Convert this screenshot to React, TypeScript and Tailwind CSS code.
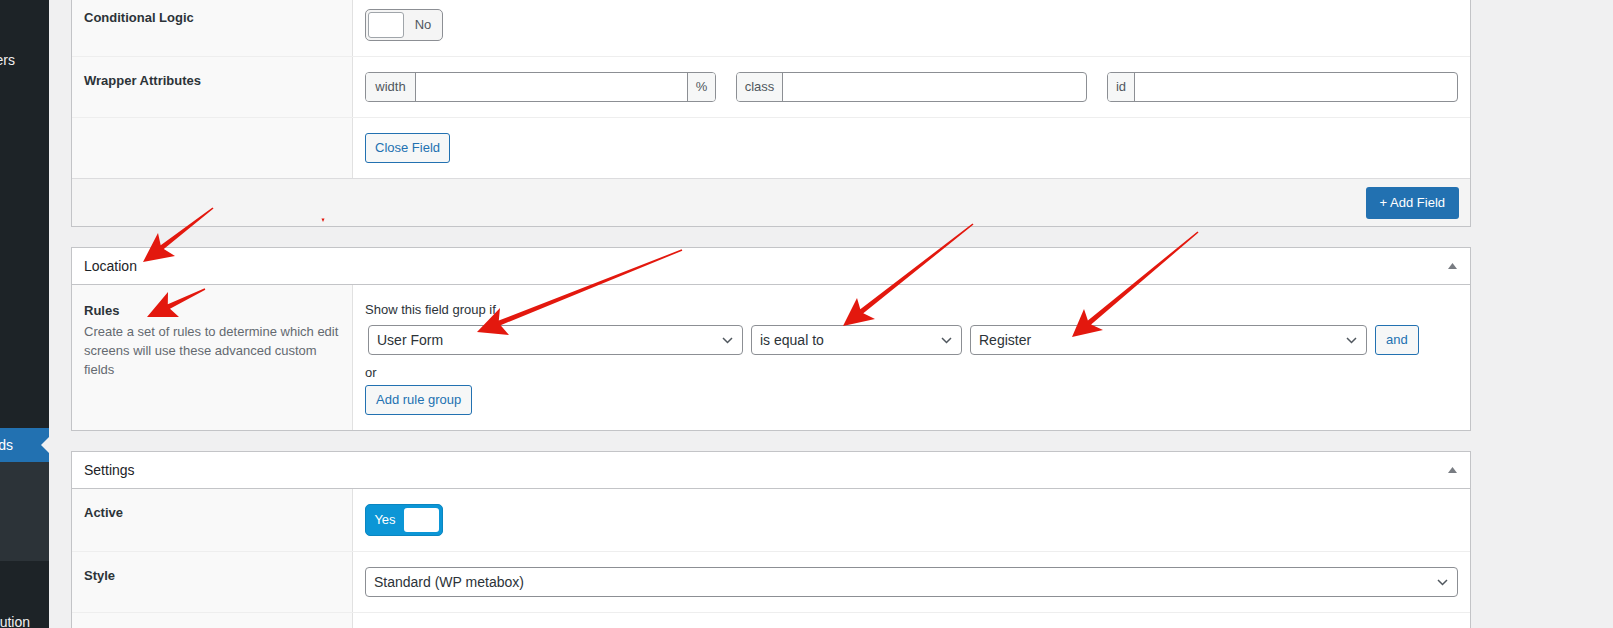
import React from "react";

type Pt = [number, number];

// red annotation arrow: thin tail, widening shaft, notched head
function arrowPoints(t: Pt, tip: Pt, b1: Pt, b2: Pt, wt = 1.5, wb = 5) {
  const dx = tip[0] - t[0];
  const dy = tip[1] - t[1];
  const len = Math.hypot(dx, dy);
  const ux = dx / len;
  const uy = dy / len;
  const nx = -uy;
  const ny = ux;
  const mid: Pt = [(b1[0] + b2[0]) / 2, (b1[1] + b2[1]) / 2];
  const proj = (mid[0] - t[0]) * ux + (mid[1] - t[1]) * uy + 5;
  const m: Pt = [t[0] + ux * proj, t[1] + uy * proj];
  const side = (b: Pt) => (b[0] - m[0]) * nx + (b[1] - m[1]) * ny;
  const [bp, bn] = side(b1) > 0 ? [b1, b2] : [b2, b1];
  const pts: Pt[] = [
    [t[0] + (nx * wt) / 2, t[1] + (ny * wt) / 2],
    [m[0] + (nx * wb) / 2, m[1] + (ny * wb) / 2],
    bp,
    tip,
    bn,
    [m[0] - (nx * wb) / 2, m[1] - (ny * wb) / 2],
    [t[0] - (nx * wt) / 2, t[1] - (ny * wt) / 2],
  ];
  return pts.map((p) => `${p[0].toFixed(1)},${p[1].toFixed(1)}`).join(" ");
}

const arrows: [Pt, Pt, Pt, Pt][] = [
  [[213, 208], [143, 262], [158, 233], [175, 256]],
  [[205, 289], [147, 317], [168, 292], [179, 317]],
  [[682, 250], [477, 332], [500, 308], [509, 335]],
  [[973, 224], [843, 326], [857, 298], [875, 319]],
  [[1198, 232], [1072, 337], [1084, 309], [1103, 330]],
];

function Chevron() {
  return (
    <svg width="11" height="7" viewBox="0 0 11 7" className="shrink-0">
      <path d="M1 1l4.5 4.5L10 1" fill="none" stroke="#50575e" strokeWidth="1.5" />
    </svg>
  );
}

function Select({ value, className }: { value: string; className: string }) {
  return (
    <div
      className={`flex h-[30px] items-center justify-between rounded-[4px] border border-[#8c8f94] bg-white pl-[8px] pr-[9px] text-[14px] text-[#2c3338] ${className}`}
    >
      <span>{value}</span>
      <Chevron />
    </div>
  );
}

function Button({ children }: { children: React.ReactNode }) {
  return (
    <button className="flex h-[30px] items-center rounded-[3px] border border-[#2271b1] bg-[#f6f7f7] px-[10px] text-[13px] text-[#2271b1]">
      {children}
    </button>
  );
}

function InputGroup({ pre, preW, post }: { pre: string; preW: string; post?: string }) {
  return (
    <div className="flex h-[30px] overflow-hidden rounded-[4px] border border-[#8c8f94] bg-white text-[13px] text-[#50575e]">
      <div className={`flex items-center justify-center border-r border-[#8c8f94] bg-[#f6f7f7] ${preW}`}>{pre}</div>
      <div className="flex-1" />
      {post && (
        <div className="flex w-[28px] items-center justify-center border-l border-[#8c8f94] bg-[#f6f7f7]">{post}</div>
      )}
    </div>
  );
}

function Row({ label, children, first }: { label?: React.ReactNode; children: React.ReactNode; first?: boolean }) {
  return (
    <div className={`flex ${first ? "" : "border-t border-[#eeeeee]"}`}>
      <div className="w-[281px] shrink-0 border-r border-[#e1e1e1] bg-[#f9f9f9] px-3 py-[15px] text-[13px] font-bold leading-[18px] text-[#2c3338]">
        {label}
      </div>
      <div className="flex-1 px-3 py-[15px]">{children}</div>
    </div>
  );
}

function PanelHeader({ title }: { title: string }) {
  return (
    <div className="flex h-[37px] items-center justify-between border-b border-[#c3c4c7] pl-3 pr-[13px] text-[14px] text-[#1d2327]">
      <span>{title}</span>
      <svg width="9" height="6" viewBox="0 0 9 6">
        <polygon points="4.5,0 9,6 0,6" fill="#787c82" />
      </svg>
    </div>
  );
}

function Sidebar() {
  return (
    <div className="flex h-full w-[49px] shrink-0 flex-col overflow-hidden bg-[#1d2327] text-[14px] text-[#f0f0f1]">
      <div className="h-[43px] shrink-0" />
      <div className="flex h-[34px] shrink-0 items-center">
        <div className="flex w-[15px] justify-end">
          <span className="shrink-0 whitespace-nowrap">Users</span>
        </div>
      </div>
      <div className="h-[351px] shrink-0" />
      <div className="relative flex h-[34px] shrink-0 items-center bg-[#2271b1] text-white">
        <div className="flex w-[13px] justify-end">
          <span className="shrink-0 whitespace-nowrap">ACF Fields</span>
        </div>
        <span className="absolute right-0 top-[9px] border-y-[8px] border-r-[8px] border-y-transparent border-r-[#f0f0f1]" />
      </div>
      <div className="h-[99px] shrink-0 bg-[#2c3338]" />
      <div className="h-[44px] shrink-0" />
      <div className="flex h-[34px] shrink-0 items-center">
        <div className="flex w-[30px] justify-end">
          <span className="shrink-0 whitespace-nowrap">Distribution</span>
        </div>
      </div>
    </div>
  );
}

export default function App() {
  return (
    <div className="relative flex h-[628px] w-[1613px] overflow-hidden bg-[#f0f0f1] font-['Liberation_Sans',Arial,sans-serif]">
      <Sidebar />

      <div className="w-[1422px] shrink-0 pl-[22px]">
        {/* Field settings (scrolled) */}
        <div className="-mt-[7px] border border-[#c3c4c7] bg-white">
          <Row label="Conditional Logic" first>
            <div className="flex h-[32px] w-[78px] items-center rounded-[5px] border border-[#8c8f94] bg-[#f5f5f5] pl-[2px]">
              <div className="h-[26px] w-[36px] rounded-[3px] border border-[#a0a5aa] bg-white" />
              <span className="flex-1 text-center text-[13px] text-[#50575e]">No</span>
            </div>
          </Row>
          <Row label="Wrapper Attributes">
            <div className="grid grid-cols-3 gap-x-5">
              <InputGroup pre="width" preW="w-[50px]" post="%" />
              <InputGroup pre="class" preW="w-[46px]" />
              <InputGroup pre="id" preW="w-[27px]" />
            </div>
          </Row>
          <Row>
            <button className="flex h-[30px] items-center rounded-[3px] border border-[#2271b1] bg-[#f6f7f7] px-[9px] text-[13px] text-[#2271b1]">
              Close Field
            </button>
          </Row>
          <div className="flex justify-end border-t border-[#dcdcde] bg-[#f4f4f4] pb-[7px] pr-[11px] pt-[8px]">
            <button className="flex h-[32px] items-center rounded-[3px] bg-[#2271b1] px-[14px] text-[13px] text-white">
              + Add Field
            </button>
          </div>
        </div>

        {/* Location */}
        <div className="mt-[20px] border border-[#c3c4c7] bg-white">
          <PanelHeader title="Location" />
          <div className="flex">
            <div className="w-[281px] shrink-0 border-r border-[#e1e1e1] bg-[#f9f9f9] px-3 pt-[16px] text-[13px] leading-[19px]">
              <div className="font-bold text-[#2c3338]">Rules</div>
              <p className="mt-[2px] text-[#646970]">
                Create a set of rules to determine which edit screens will use these advanced custom fields
              </p>
            </div>
            <div className="flex-1 px-3 pb-[15px] pt-[15px] text-[13px] text-[#2c3338]">
              <div className="leading-[20px]">Show this field group if</div>
              <div className="mt-[5px] flex items-center gap-2 pl-[3px]">
                <Select value="User Form" className="w-[375px]" />
                <Select value="is equal to" className="w-[211px]" />
                <Select value="Register" className="w-[397px]" />
                <Button>and</Button>
              </div>
              <div className="mt-[9px] leading-[18px]">or</div>
              <div className="mt-[3px] flex">
                <Button>Add rule group</Button>
              </div>
            </div>
          </div>
        </div>

        {/* Settings */}
        <div className="mt-[20px] border border-[#c3c4c7] bg-white">
          <PanelHeader title="Settings" />
          <Row label="Active" first>
            <div className="flex h-[32px] w-[78px] items-center rounded-[5px] border border-[#0a86c1] bg-[#0c96d6] pr-[3px]">
              <span className="flex-1 text-center text-[13px] text-white">Yes</span>
              <div className="h-[24px] w-[35px] rounded-[3px] bg-white" />
            </div>
          </Row>
          <Row label="Style">
            <Select value="Standard (WP metabox)" className="w-full" />
          </Row>
          <Row label="">
            <div className="h-[30px]" />
          </Row>
        </div>
      </div>

      {/* red annotations */}
      <svg className="pointer-events-none absolute left-0 top-0" width="1613" height="628" viewBox="0 0 1613 628">
        {arrows.map((a, i) => (
          <polygon key={i} points={arrowPoints(a[0], a[1], a[2], a[3])} fill="#e3180e" />
        ))}
        <polygon points="321.5,218.5 324.5,218.5 323,222" fill="#e3180e" />
      </svg>
    </div>
  );
}
